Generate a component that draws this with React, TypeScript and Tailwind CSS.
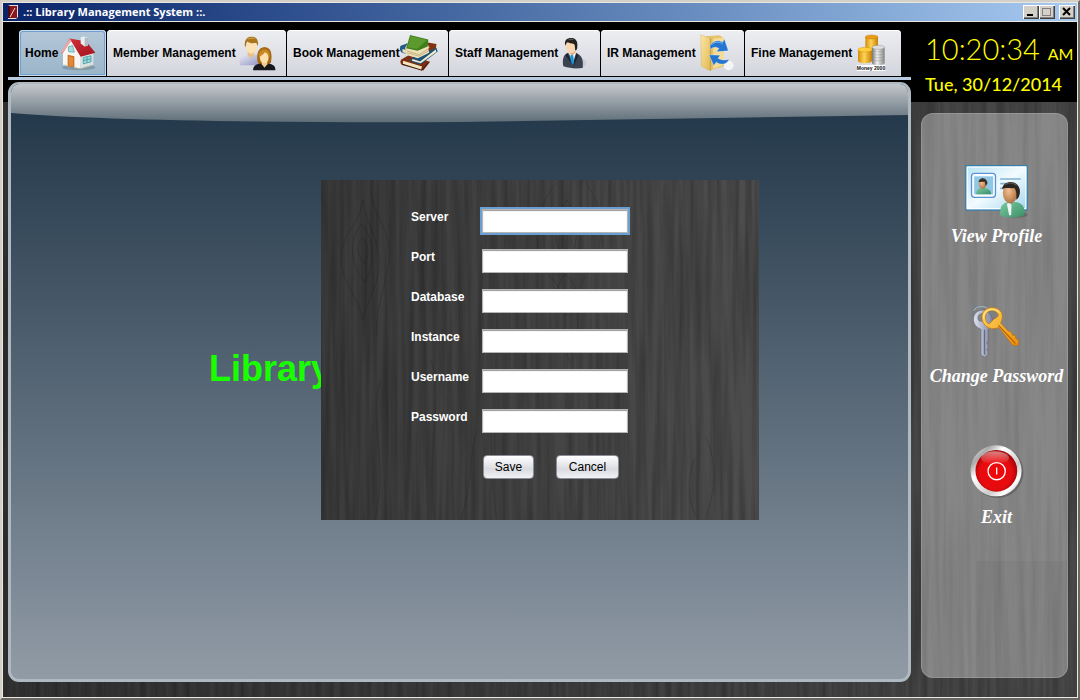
import React from "react";
import type { ReactNode } from "react";

function Wood({ id, knots = false }: { id: string; knots?: boolean }) {
  return (
    <svg className="pointer-events-none absolute inset-0 h-full w-full" aria-hidden="true">
      <filter id={id} x="0" y="0" width="100%" height="100%">
        <feTurbulence type="fractalNoise" baseFrequency="0.16 0.006" numOctaves="3" seed="7" />
        <feColorMatrix values="0 0 0 0 0  0 0 0 0 0  0 0 0 0 0  0.5 0 0 0 -0.16" />
      </filter>
      <rect width="100%" height="100%" filter={`url(#${id})`} />
      {knots && (
        <g fill="none" stroke="#000" strokeOpacity=".13">
          <path d="M41 58c8 8 7 18 3 26-8-8-9-18-3-26ZM40 44c15 14 13 42 4 58-16-18-16-42-4-58ZM42 20c-2 22-22 34-22 58s18 40 22 62c4-22 18-36 16-62-2-24-14-36-16-58ZM50 0c-4 30 22 50 18 80s-14 50-12 76" />
          <path d="M246 20c-14 18-16 46 0 60 14-16 12-44 0-60ZM244 94c-12 14-10 34 4 42 12-10 10-32-4-42Zm-8-92c-26 30-26 74-4 98s4 60 18 84M262 0c24 26 22 70 4 94s-2 56-14 88" />
          <path d="M156 250c-8 26-4 50-16 90M166 230c8 36 2 66 10 110M374 278c-8 20-8 42 2 60M384 256c14 28 10 56 0 84M60 200c-14 36 8 80-6 140M110 180c14 40-6 84 4 160" />
        </g>
      )}
    </svg>
  );
}

function HouseIcon() {
  return (
    <svg viewBox="178 108 108 104" className="h-[35px] w-9" aria-hidden="true">
      <defs>
        <linearGradient id="roof" x1="0" y1="0" x2="1" y2="1">
          <stop offset="0" stopColor="#d8343c" />
          <stop offset="1" stopColor="#a3141e" />
        </linearGradient>
      </defs>
      <ellipse cx="234" cy="202" rx="50" ry="8" fill="#5d7488" opacity=".45" />
      <path d="M187 156l26-36 27 44v41l-53-10Z" fill="#f7f6f2" />
      <path d="M240 164l38-8v38l-38 11Z" fill="#dcdfe0" />
      <path d="M206 115l50 8 28 35-44 12-30-50-23 38-6 2Z" fill="url(#roof)" />
      <path d="M240 112l8-3 14 3v24l-10 3-12-9Z" fill="#eceff1" />
      <path d="M252 113l10-1v24l-10 3Z" fill="#b3bcc4" />
      <path d="M179 158l27-43 6 5-25 38Z" fill="#e9a9a9" />
      <path d="M201 164l20 4v34l-20-4Z" fill="#c66a1e" />
      <path d="M204 168l14 3v28l-14-3Z" fill="#e08a38" />
      <path d="M203 140l13-4 5 20-17-1Z" fill="#a8dce2" stroke="#4f9aa4" strokeWidth="2" />
      <path d="M248 172l23-5v18l-23 6Z" fill="#93dada" stroke="#2f8f98" strokeWidth="2" />
      <path d="M259 170v18M248 181l23-5" stroke="#2f8f98" strokeWidth="2" />
      <path d="M189 194l10 3M224 204l16 3 38-12" stroke="#a9b78c" strokeWidth="2" fill="none" />
    </svg>
  );
}

function MembersIcon() {
  return (
    <svg viewBox="720 104 110 104" className="h-[35px] w-[37px]" aria-hidden="true">
      <defs>
        <linearGradient id="shirt" x1="0" y1="0" x2="1" y2="1">
          <stop offset="0" stopColor="#eeeef8" />
          <stop offset="1" stopColor="#8d90be" />
        </linearGradient>
      </defs>
      <path d="M722 191c-1-22 5-31 22-34l14 6 16-5c10 4 14 14 14 33Z" fill="url(#shirt)" />
      <path d="M746 148h20v12l-10 10-10-9Z" fill="#e9bf85" />
      <ellipse cx="757" cy="137" rx="16" ry="20" fill="#fbe1b4" />
      <path d="M738 138c-4-22 6-33 20-32 14 0 21 10 18 28-3-4-3-8-5-10-10 3-20 1-27-4-3 6-2 12-6 18Z" fill="#a9741c" />
      <path d="M742 116c8-9 20-10 29-3-10-2-19-1-29 3Z" fill="#cf9d48" />
      <path d="M776 184c-6-28 2-46 20-47 18 1 24 18 19 46l-9 9h-22Z" fill="#a76a12" />
      <path d="M762 206c-1-12 8-18 22-20l12 8 12-8c14 3 21 8 20 20Z" fill="#17171c" />
      <path d="M788 176h16v12l-8 10-8-9Z" fill="#f3c88c" />
      <ellipse cx="795" cy="168" rx="13" ry="17" fill="#fde0ad" />
      <path d="M779 168c0-18 7-24 17-24s17 8 15 24c-3-10-8-14-14-16-4 7-12 9-18 16Z" fill="#c98a25" />
    </svg>
  );
}

function BooksIcon() {
  return (
    <svg viewBox="360 36 122 122" className="h-10 w-10" aria-hidden="true">
      <path d="M440 62l36 6-2 18-44 14Z" fill="#823312" />
      <path d="M362 74l22-8 52 22-12 22-58-14c-7-5-8-14-4-22Z" fill="#1f5b86" />
      <path d="M368 84l54 16-2 9-52-14Z" fill="#efe4c0" />
      <path d="M364 118l22-13 70 20-22 28-68-18c-6-5-6-12-2-17Z" fill="#7c2e12" />
      <path d="M370 122l60 18-3 11-58-18Z" fill="#f2e5bd" />
      <path d="M392 116l84-36 4 12-54 42-28-8Z" fill="#1d5277" />
      <path d="M400 116l24 8 50-38 2 8-50 36-28-8Z" fill="#f4ead0" />
      <path d="M376 80l10-16 64 8 4 8-40 32-36-12Z" fill="#d9cba0" />
      <path d="M380 84l68-8 5 20-36 18-38-13Z" fill="#efe2b8" />
      <path d="M382 90l38 12 30-18M382 96l38 11 30-16" fill="none" stroke="#ad9563" strokeWidth="2" />
      <path d="M392 40l58 14-2 22-32 14-36-8Z" fill="#3e7f1c" />
      <path d="M394 43l52 13-32 28-30-5Z" fill="#5c9a2e" />
      <path d="M366 132l64 20 20-24" fill="none" stroke="#3c1407" strokeWidth="3" />
    </svg>
  );
}

function StaffIcon() {
  return (
    <svg viewBox="852 50 84 96" className="h-8 w-7" aria-hidden="true">
      <ellipse cx="908" cy="128" rx="18" ry="13" fill="#b9bdc6" opacity=".5" />
      <path d="M856 138c-4-22 1-36 14-40l14 8 12-7c16 7 21 20 18 44-20 2-36 2-58-5Z" fill="#3c4350" />
      <path d="M872 98l4-8h14l3 11-8 26Z" fill="#f4f5f8" />
      <path d="M877 106l5-4 4 4 2 20-4 8-6-8Z" fill="#1795d6" />
      <path d="M868 97l-6 8 22 30-6-14Zm28 0l5 9-14 32 2-16Z" fill="#20242e" />
      <path d="M872 86h20v11l-9 8-10-7Z" fill="#dba775" />
      <ellipse cx="880" cy="78" rx="16" ry="21" fill="#f7d6b0" />
      <path d="M862 76c-5-17 6-24 20-23 14 1 19 13 15 34l-5 4c-2-9 0-15-4-20-8-2-14-2-19-5-4 2-4 5-7 10Z" fill="#24211f" />
      <path d="M868 60c7-6 15-6 21-1Z" fill="#5b5653" />
    </svg>
  );
}

function FolderIcon() {
  return (
    <svg viewBox="334 46 102 116" className="h-[39px] w-[34px]" aria-hidden="true">
      <defs>
        <linearGradient id="folder" x1="0" y1="0" x2="1" y2="1">
          <stop offset="0" stopColor="#fbe7a6" />
          <stop offset="1" stopColor="#e2b954" />
        </linearGradient>
      </defs>
      <ellipse cx="420" cy="140" rx="15" ry="14" fill="#fff" opacity=".7" />
      <path d="M350 52l42-3 14 9v84l-40 12Z" fill="#e5c36d" />
      <path d="M374 60l32-4v82l-32 12Z" fill="#f6dc93" />
      <path d="M336 48l28 10v98l-26-14Z" fill="url(#folder)" stroke="#cfa447" />
      <path d="M366 58v98" stroke="#b98d34" strokeWidth="2" />
      <path d="M364 80c10-16 26-18 38-10l5-10 12 36-36 3 8-10c-10-6-18-5-26 3Z" fill="#2475d0" stroke="#fff" strokeWidth="1" />
      <path d="M422 122c-9 17-27 17-39 8l-8 10-14-32 34 1-7 9c9 6 20 6 34 4Z" fill="#2475d0" stroke="#fff" strokeWidth="1" />
      <path d="M368 79c10-12 22-11 34-4" fill="none" stroke="#7fb8f2" strokeWidth="3" />
    </svg>
  );
}

function MoneyIcon() {
  return (
    <svg viewBox="798 44 108 114" className="h-[38px] w-9" aria-hidden="true">
      <defs>
        <linearGradient id="gold">
          <stop offset="0" stopColor="#d18b0a" />
          <stop offset=".45" stopColor="#ffd455" />
          <stop offset="1" stopColor="#c47d06" />
        </linearGradient>
        <linearGradient id="silver">
          <stop offset="0" stopColor="#777" />
          <stop offset=".4" stopColor="#f2f2f2" />
          <stop offset="1" stopColor="#858585" />
        </linearGradient>
      </defs>
      <path d="M829 52v34c4 7 34 7 38 0V52Z" fill="url(#gold)" />
      <ellipse cx="848" cy="53" rx="19" ry="6" fill="#ec9b18" stroke="#b06c04" />
      <path d="M807 90v36c4 8 38 8 42 0V90Z" fill="url(#gold)" />
      <ellipse cx="828" cy="91" rx="21" ry="7" fill="#ffcf3c" stroke="#c07d09" />
      <path d="M849 84v48c4 8 34 8 38 0V84Z" fill="url(#silver)" />
      <path d="M849 93c6 6 32 6 38 0m-38 9c6 6 32 6 38 0m-38 9c6 6 32 6 38 0m-38 9c6 6 32 6 38 0" fill="none" stroke="#777" />
      <ellipse cx="868" cy="84" rx="19" ry="6" fill="#dedede" stroke="#777" />
      <rect x="803" y="137" width="86" height="18" fill="#fff" />
      <text x="846" y="152" textAnchor="middle" fontSize="15" fontWeight="700" fontFamily="Liberation Sans, sans-serif" fill="#111">
        Money 2000
      </text>
    </svg>
  );
}

function ProfileIcon() {
  return (
    <svg viewBox="162 70 194 162" className="h-[54px] w-[65px]" aria-hidden="true">
      <defs>
        <linearGradient id="card" x1="0" y1="0" x2="1" y2="1">
          <stop offset="0" stopColor="#b8e3f4" />
          <stop offset=".5" stopColor="#f2fbfe" />
          <stop offset="1" stopColor="#a2d6ee" />
        </linearGradient>
        <linearGradient id="coat" x1="0" y1="0" x2="1" y2="1">
          <stop offset="0" stopColor="#7cc9a2" />
          <stop offset="1" stopColor="#3a8f67" />
        </linearGradient>
        <radialGradient id="face" cx=".4" cy=".4" r=".7">
          <stop offset="0" stopColor="#f3c08f" />
          <stop offset="1" stopColor="#a8683c" />
        </radialGradient>
      </defs>
      <rect x="167" y="75" width="184" height="133" fill="url(#card)" stroke="#2f7fae" strokeWidth="4" />
      <rect x="171" y="79" width="176" height="125" fill="none" stroke="#fff" strokeWidth="3" />
      <rect x="184" y="98" width="72" height="72" rx="9" fill="#f8fcff" stroke="#5c93d2" strokeWidth="4" />
      <rect x="192" y="107" width="57" height="54" fill="#8fc8e4" />
      <path d="M198 161c0-14 6-17 15-19h12c12 3 18 8 18 19Z" fill="url(#coat)" />
      <ellipse cx="217" cy="130" rx="11" ry="15" fill="url(#face)" />
      <path d="M205 124c2-15 25-16 27 4l-5 8-3-13Z" fill="#3a2c22" />
      <path d="M270 115h62M270 129h20M270 143h12" stroke="#7fb4d3" strokeWidth="5" />
      <ellipse cx="320" cy="222" rx="33" ry="9" fill="#333" opacity=".3" />
      <path d="M270 224c-2-28 8-37 24-40h24c18 4 27 14 25 38-16 10-54 12-73 2Z" fill="url(#coat)" />
      <path d="M290 190l6-4 8 6-1 32h-6Z" fill="#eef6f2" />
      <ellipse cx="300" cy="157" rx="22" ry="31" fill="url(#face)" />
      <path d="M276 145c2-26 48-30 53 3 2 15-5 26-11 29 1-12 2-25-5-35-12 2-26-3-37 3Z" fill="#2b2522" />
      <path d="M286 132c11-7 22-7 33 2" fill="none" stroke="#71665f" strokeWidth="3" />
    </svg>
  );
}

function KeysIcon() {
  return (
    <svg viewBox="188 62 146 164" className="h-[54px] w-12" aria-hidden="true">
      <defs>
        <linearGradient id="goldKey" x1="0" y1="0" x2="1" y2="1">
          <stop offset="0" stopColor="#ffd561" />
          <stop offset="1" stopColor="#ec8f08" />
        </linearGradient>
        <linearGradient id="steelKey">
          <stop offset="0" stopColor="#dfe3f0" />
          <stop offset="1" stopColor="#7e849c" />
        </linearGradient>
      </defs>
      <path d="M194 84c2-16 36-22 48-4 6 12-2 22-12 26" fill="none" stroke="#71858f" strokeWidth="5" />
      <path d="M194 82c4-14 34-18 46-2" fill="none" stroke="#c6d4da" strokeWidth="2" />
      <path fillRule="evenodd" d="M218 80c-18 2-28 17-25 34 2 12 10 20 22 25v78l11 7 11-8v-10l-4-5 4-6v-9l-4-5 4-7v-35c15-8 17-27 9-42-6-11-16-18-28-17Zm-3 12c10-3 17 5 14 14s-20 12-22 3 0-15 8-17Z" fill="url(#steelKey)" stroke="#62687f" strokeWidth="2" />
      <path d="M226 140v76" stroke="#646a83" strokeWidth="4" />
      <path fillRule="evenodd" d="M240 74c-18 5-26 22-20 40 8 21 30 28 50 19l42 54 16 1 2-16-9-5-1-9-10-2-3-10-9-2-23-24c8-16 7-32-4-40-9-7-21-9-31-6Zm-1 10c12-5 25 0 29 10 1 8-9 10-16 16-6 8-11 15-17 10-8-10-9-28 4-36Z" fill="url(#goldKey)" stroke="#bd6d06" strokeWidth="2" />
      <path d="M269 127l51 55" stroke="#b96305" strokeWidth="4" />
      <path d="M224 108c-3-16 6-28 22-29 11-1 20 3 25 9" fill="none" stroke="#ffeaa0" strokeWidth="3" />
    </svg>
  );
}

function ExitIcon() {
  return (
    <svg viewBox="176 46 168 166" className="h-[55px] w-14" aria-hidden="true">
      <defs>
        <linearGradient id="chrome" x1="0" y1="0" x2="1" y2="1">
          <stop offset="0" stopColor="#fff" />
          <stop offset=".2" stopColor="#aaa" />
          <stop offset=".35" stopColor="#fff" />
          <stop offset=".65" stopColor="#ccc" />
          <stop offset=".8" stopColor="#fff" />
          <stop offset="1" stopColor="#888" />
        </linearGradient>
        <radialGradient id="red" cx=".48" cy=".55" r=".55">
          <stop offset="0" stopColor="#f20808" />
          <stop offset=".7" stopColor="#e50c10" />
          <stop offset="1" stopColor="#9e0408" />
        </radialGradient>
        <linearGradient id="shine" x1="0" y1="0" x2="0" y2="1">
          <stop offset="0" stopColor="#fff" stopOpacity=".5" />
          <stop offset="1" stopColor="#fff" stopOpacity="0" />
        </linearGradient>
      </defs>
      <circle cx="262" cy="131" r="78" fill="#333" opacity=".35" />
      <circle cx="257" cy="127" r="77" fill="url(#chrome)" />
      <circle cx="258" cy="127" r="63" fill="url(#red)" />
      <ellipse cx="254" cy="88" rx="42" ry="20" fill="url(#shine)" />
      <circle cx="259" cy="128" r="26" fill="none" stroke="#fff" strokeWidth="4" />
      <path d="M259 117v21" stroke="#fff" strokeWidth="4" />
    </svg>
  );
}

function Tab({ label, width, active = false, children }: { label: string; width: string; active?: boolean; children: ReactNode }) {
  return (
    <button
      type="button"
      className={`flex h-[46px] items-center justify-between rounded-t pl-1.5 pr-2.5 text-xs font-bold whitespace-nowrap text-black ${width} ${
        active
          ? "bg-linear-to-b from-[#b4c8d9] to-[#9ab4c8] shadow-[inset_0_0_0_1px_#c9dbe9,inset_0_0_0_2px_#6f9fce]"
          : "bg-linear-to-b from-[#eceef1] to-[#d3d5dd] shadow-[inset_0_1px_0_#fff]"
      }`}
    >
      {label}
      {children}
    </button>
  );
}

function SideButton({ label, children }: { label: string; children: ReactNode }) {
  return (
    <button type="button" className="flex flex-col items-center gap-2 font-['Liberation_Serif',serif] text-lg leading-5 font-bold whitespace-nowrap text-white italic">
      {children}
      {label}
    </button>
  );
}

function WindowButton({ label, children }: { label: string; children: ReactNode }) {
  return (
    <button
      type="button"
      aria-label={label}
      className="h-3.5 w-4 bg-[#d4d0c8] shadow-[inset_1px_1px_0_#fff,inset_-1px_-1px_0_#404040,inset_-2px_-2px_0_#808080]"
    >
      <svg viewBox="0 0 16 14" className="h-3.5 w-4" fill="none" shapeRendering="crispEdges">
        {children}
      </svg>
    </button>
  );
}

const fields = [
  { name: "server", label: "Server", type: "text" },
  { name: "port", label: "Port", type: "text" },
  { name: "database", label: "Database", type: "text" },
  { name: "instance", label: "Instance", type: "text" },
  { name: "username", label: "Username", type: "text" },
  { name: "password", label: "Password", type: "password" },
];

function ConnectionDialog() {
  const button =
    "h-6 rounded border border-[#8b8e95] bg-linear-to-b from-white via-[#d9dbe1] via-60% to-[#f1f2f5] text-xs text-black";
  return (
    <div className="pointer-events-none fixed inset-0 grid place-items-center">
      <form
        role="dialog"
        aria-label="Server"
        onSubmit={(e) => e.preventDefault()}
        className="pointer-events-auto relative h-[340px] w-[438px] bg-linear-to-r from-[#3b3b3b] to-[#4d4d4d] pt-[29px] pl-[90px]"
      >
        <Wood id="dialog-grain" knots />
        <div className="relative grid grid-cols-[71px_1fr] gap-y-4">
          {fields.map((f, i) => (
            <React.Fragment key={f.name}>
              <label htmlFor={f.name} className="text-xs leading-4 font-bold text-white">
                {f.label}
              </label>
              <input
                id={f.name}
                type={f.type}
                className={`h-6 w-[146px] border border-[#b5b5b5] bg-white px-1 text-xs text-black shadow-[inset_0_1px_1px_#9a9a9a] outline-2 focus:outline-[#6a9fd4] ${
                  i === 0 ? "outline-[#6a9fd4]" : "outline-transparent"
                }`}
              />
            </React.Fragment>
          ))}
        </div>
        <div className="relative mt-[22px] flex gap-[22px] pl-[72px]">
          <button type="submit" className={`w-[51px] ${button}`}>
            Save
          </button>
          <button type="button" className={`w-[63px] ${button}`}>
            Cancel
          </button>
        </div>
      </form>
    </div>
  );
}

export default function App() {
  return (
    <div className="flex min-h-screen flex-col border-2 border-t-[#d4d0c8] border-r-[#6b6863] border-b-[#6b6863] border-l-[#d4d0c8] bg-[#e9e7e2] p-px font-['Liberation_Sans',Arial,sans-serif]">
      <header className="flex h-[18px] items-center gap-1 bg-linear-to-r from-[#0a246a] to-[#a6caf0] pr-0.5 pl-1">
        <svg viewBox="0 0 12 14" className="h-3.5 w-3" aria-hidden="true">
          <path d="M1 1l2-1h8v12l-2 2H1Z" fill="#e5dcd8" />
          <path d="M2 1h8v12H1Z" fill="#8c1620" />
          <path d="M1 1h2v12H1Z" fill="#4c0a10" />
          <path d="M3 12l5-9" stroke="#e6d8d2" />
        </svg>
        <h1 className="flex-1 font-['Open_Sans','Noto_Sans',sans-serif] text-[11px] font-bold text-white">.:: Library Management System ::.</h1>
        <div className="flex">
          <WindowButton label="Minimize">
            <path d="M4 10h6" stroke="#000" strokeWidth="2" />
          </WindowButton>
          <WindowButton label="Maximize">
            <path d="M3.500 3.500h8v7h-8ZM3 3h9" stroke="#808080" />
          </WindowButton>
        </div>
        <WindowButton label="Close">
          <path d="M4 3l7 7M11 3l-7 7" stroke="#000" strokeWidth="2" shapeRendering="auto" />
        </WindowButton>
      </header>

      <div className="relative mt-px flex flex-1 bg-linear-to-r from-[#333333] to-[#494949]">
        <Wood id="page-grain" />
        <div className="absolute inset-x-0 top-0 h-20 bg-black" />

        <main className="relative flex flex-1 flex-col pt-2 pb-[15px] pl-[5px]">
          <nav className="flex gap-px pb-px pl-[11px]">
            <Tab label="Home" width="w-[87px]" active>
              <HouseIcon />
            </Tab>
            <Tab label="Member Management" width="w-[179px]">
              <MembersIcon />
            </Tab>
            <Tab label="Book Management" width="w-[161px]">
              <BooksIcon />
            </Tab>
            <Tab label="Staff Management" width="w-[151px]">
              <StaffIcon />
            </Tab>
            <Tab label="IR Management" width="w-[143px]">
              <FolderIcon />
            </Tab>
            <Tab label="Fine Management" width="w-[156px]">
              <MoneyIcon />
            </Tab>
          </nav>
          <div className="mb-0.5 h-[3px] bg-[#b8cae0]" />
          <section className="relative flex-1 overflow-hidden rounded-[11px] border-[3px] border-t-2 border-[#aeb9c1] bg-linear-to-b from-[#1e3446] to-[#919ba6]">
            <svg viewBox="0 0 900 40" preserveAspectRatio="none" className="h-10 w-full" aria-hidden="true">
              <defs>
                <linearGradient id="gloss" x1="0" y1="0" x2="0" y2="1">
                  <stop offset="0" stopColor="#c3c8cc" />
                  <stop offset="1" stopColor="#5f6e79" />
                </linearGradient>
              </defs>
              <path d="M0 0h900v31L450 38C260 39 80 36 0 29Z" fill="url(#gloss)" />
            </svg>
            <h2 className="pt-[221px] pl-[198px] text-4xl leading-[48px] font-bold text-[#19ff00]">Library</h2>
          </section>
        </main>

        <aside className="relative flex w-[166px] flex-col">
          <div className="h-20 pl-3.5 font-['Lato',sans-serif] whitespace-nowrap text-[#ffff00]">
            <p className="pt-2 text-[29px] leading-[38px] font-light">
              10:20:34 <span className="text-base font-normal">AM</span>
            </p>
            <p className="text-lg leading-8 font-medium">Tue, 30/12/2014</p>
          </div>
          <div className="mt-[11px] mr-[9px] mb-[19px] ml-2.5 flex flex-1 flex-col items-center gap-[58px] rounded-xl border border-white/15 bg-white/35 bg-[linear-gradient(#0000000a,#0000000a)] bg-[length:91px_116px] bg-[position:right_bottom] bg-no-repeat pt-[50px] pl-1">
            <SideButton label="View Profile">
              <ProfileIcon />
            </SideButton>
            <SideButton label="Change Password">
              <KeysIcon />
            </SideButton>
            <SideButton label="Exit">
              <ExitIcon />
            </SideButton>
          </div>
        </aside>
      </div>

      <ConnectionDialog />
    </div>
  );
}
